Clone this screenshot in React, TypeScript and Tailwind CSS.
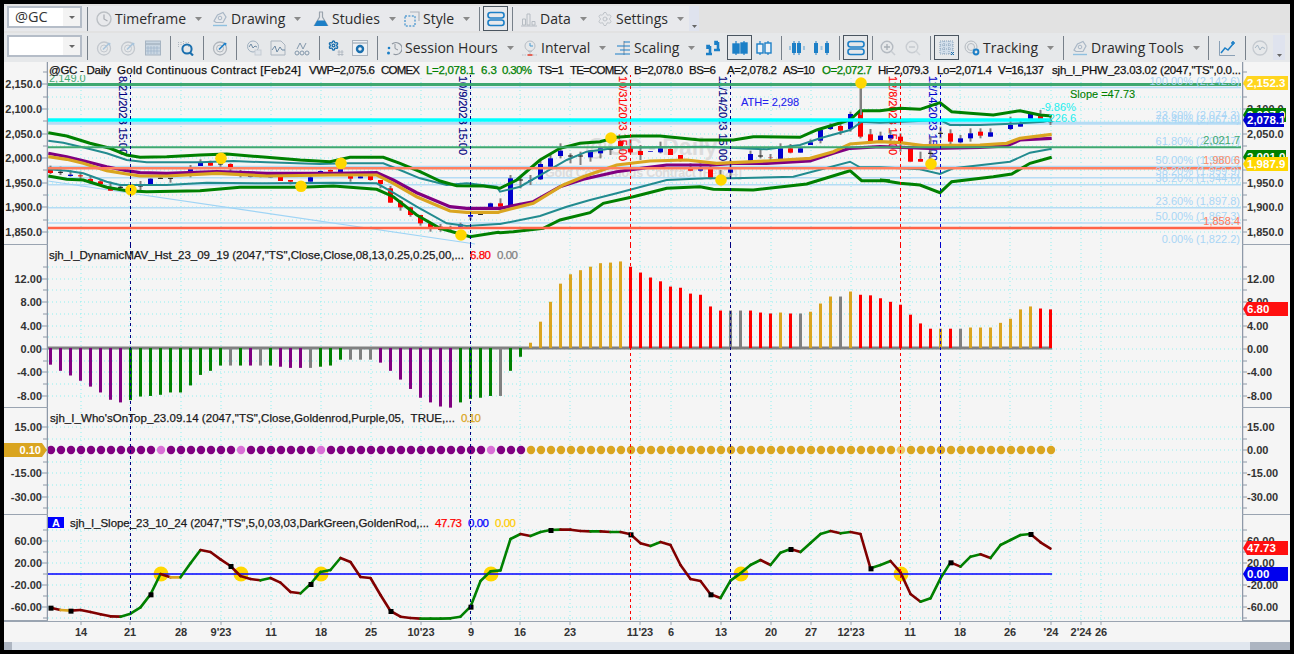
import React from 'react';
import { Settings } from 'lucide-react';

// x of bar i in the plot
const bx = (i: number) => 50.5 + 10 * i;

const BLUE = '#1c7fc7';
const DIS = '#c3c8ce';

type TP = { x: number; y: number; c?: string; s?: number; a?: 'start' | 'middle' | 'end'; b?: boolean; fake?: number; w?: number; children: React.ReactNode };

const T = ({ x, y, c = '#1a1a1a', s = 11, a = 'start', b = false, fake = 0.25, w, children }: TP) => (
  <text x={x} y={y} fill={c} stroke={b ? 'none' : c} strokeWidth={b ? 0 : fake} fontSize={s} textAnchor={a} fontWeight={b ? 700 : 400} dominantBaseline="central" xmlSpace="preserve" textLength={w}>
    {children}
  </text>
);

const Caret = () => (
  <svg width="7" height="4" viewBox="0 0 7 4" className="ml-[9px] shrink-0">
    <path d="M0 0h7L3.5 4z" fill="#8a8a8a" />
  </svg>
);

const Sep = ({ className = '' }: { className?: string }) => <div className={`h-[24px] w-px shrink-0 bg-[#77808a] ${className}`} />;

const Ic = ({ children, className = '', w = 16 }: { children: React.ReactNode; className?: string; w?: number }) => (
  <svg width={w} height="16" viewBox={`0 0 ${w} 16`} fill="none" className={`shrink-0 ${className}`}>
    {children}
  </svg>
);

const Boxed = ({ children, className = '' }: { children: React.ReactNode; className?: string }) => (
  <div className={`flex h-[25px] w-[25px] shrink-0 items-center justify-center border-[1.5px] border-[#4a5560] ${className}`}>{children}</div>
);

const Combo = ({ text = '', className = '' }: { text?: string; className?: string }) => (
  <div className={`flex h-[22px] w-[75px] shrink-0 items-center self-start border-2 border-[#b5bdc8] bg-white ${className}`}>
    <span className="w-[54px] pl-[6px] text-[14.5px] text-[#333]">{text}</span>
    <div className="flex h-full flex-1 items-center justify-center bg-[#f3f3f3]">
      <svg width="6" height="3" viewBox="0 0 6 3"><path d="M0 0h6L3 3z" fill="#666" /></svg>
    </div>
  </div>
);

const Menu = ({ icon, label, className }: { icon: React.ReactNode; label: string; className: string }) => (
  <div className={`flex shrink-0 items-center ${className}`}>
    {icon}
    <span className="ml-[3px] text-[14px] leading-none text-[#2b2b2b]">{label}</span>
    <Caret />
  </div>
);

const Chevron = ({ className }: { className: string }) => (
  <div className={`flex h-[25px] shrink-0 items-end justify-center pb-[3px] ${className} bg-[#dfe3ee]`}>
    <svg width="5" height="3" viewBox="0 0 5 3"><path d="M0 0h5L2.5 3z" fill="#666" /></svg>
  </div>
);

const Panels = () => (
  <Ic w={18}>
    <rect x="1" y="1.5" width="16" height="5.5" rx="2.5" stroke={BLUE} strokeWidth="1.6" />
    <rect x="1" y="9" width="16" height="5.5" rx="2.5" stroke={BLUE} strokeWidth="1.6" />
  </Ic>
);
const Candles = ({ fill }: { fill: boolean }) => (
  <Ic w={18}>
    <path d="M5 1v14M13 1v14" stroke={BLUE} strokeWidth="1.2" />
    <rect x="2" y="4" width="6" height="9" fill={fill ? BLUE : '#eef3f8'} stroke={BLUE} strokeWidth="1.4" />
    <rect x="10" y="3" width="6" height="10" fill={fill ? BLUE : '#eef3f8'} stroke={BLUE} strokeWidth="1.4" />
  </Ic>
);
const RadarArrow = ({ c = DIS }: { c?: string }) => (
  <Ic>
    <circle cx="8" cy="8.5" r="6.5" stroke={c} strokeWidth="1.3" />
    <circle cx="8" cy="8.5" r="3.5" stroke={c} />
    <path d="M7 9.5l6-6" stroke={c === DIS ? '#a8c4dc' : BLUE} strokeWidth="1.6" />
    <path d="M11.5 2.5l3 .5-.5 3" fill={c === DIS ? '#a8c4dc' : BLUE} />
  </Ic>
);
const PenIcon = () => (
  <Ic>
    <path d="M2 10l3.5-6L11 1.5l3 4.5-3 5.5H4z" stroke="#a9b7c6" strokeWidth="1.2" />
    <circle cx="8" cy="7" r="1.8" stroke="#a9b7c6" />
    <path d="M1 14.5h14" stroke="#8fc0e0" strokeWidth="1.4" />
  </Ic>
);

function Toolbars() {
  return (
    <div className="flex h-[58px] shrink-0 flex-col bg-[#e2e2e2] [font-family:'Open_Sans','Noto_Sans',sans-serif]">
      <div className="h-[29px] pt-[2px]">
        <div className="flex h-[25px] w-[695px] items-center bg-[#e8e9ec] pl-[3px]">
          <Combo text="@GC" />
          <Sep className="ml-[5px]" />
          <Menu className="ml-[8px] w-[116px]" label="Timeframe" icon={<Ic><circle cx="8" cy="8" r="7" stroke="#bcc0c5" strokeWidth="1.4" /><path d="M8 3.5V8l3.5 2" stroke="#a8acb2" strokeWidth="1.2" /></Ic>} />
          <Menu className="w-[101px]" label="Drawing" icon={<PenIcon />} />
          <Menu className="w-[91px]" label="Studies" icon={<Ic><path d="M6 1h4M6.5 1v5L1.5 14.5h13L9.5 6V1" stroke="#9aa3ad" strokeWidth="1.2" /><path d="M4.2 9.5h7.6l3 5.5H1.2z" fill={BLUE} /></Ic>} />
          <Menu className="w-[75px]" label="Style" icon={<Ic><rect x="1" y="5" width="10" height="10" stroke={BLUE} strokeDasharray="2 1.4" /><path d="M6 1h9v9" stroke="#aeb4bb" strokeWidth="1.2" /></Ic>} />
          <Sep />
          <Boxed className="ml-[3px]"><Panels /></Boxed>
          <Sep className="ml-[4px]" />
          <Menu className="ml-[8px] w-[76px]" label="Data" icon={<Ic><path d="M1.5 8h3v6h-3zM6 3h3v11H6zM11 10.5h3V14h-3zM0 15h16" stroke="#b6bcc3" /></Ic>} />
          <Menu className="w-[92px]" label="Settings" icon={<Settings size={16} color="#b9bec4" strokeWidth={1.3} className="shrink-0" />} />
          <Chevron className="w-[10px]" />
        </div>
      </div>
      <div className="flex h-[29px] items-center bg-[#e6e8ea] pl-[3px]">
        <Combo className="mt-[2px]" />
        <Sep className="ml-[5px]" />
        <div className="ml-[8px]"><RadarArrow /></div>
        <div className="ml-[8px]"><RadarArrow /></div>
        <Ic className="ml-[9px]"><rect x="0.5" y="1" width="15" height="14" fill="#c9d6e2" stroke="#a6b4c2" /><path d="M0.5 4h15" stroke="#a6b4c2" strokeWidth="1.5" /><path d="M3 6v8M6 6v8M9 6v8M12 6v8M1 8h14M1 11h14" stroke="#9fb5ca" strokeWidth="0.7" /></Ic>
        <Sep className="ml-[9px]" />
        <Ic className="ml-[7px]"><path d="M0.5 7V1M3 5V1M5.5 4V1M8 5V1M10.5 7V1" stroke="#aeb6bf" strokeDasharray="1 1" /><circle cx="9" cy="9" r="4.6" stroke="#1a6fae" strokeWidth="2" /><path d="M12 12.5l3 3" stroke="#1a6fae" strokeWidth="2.2" /></Ic>
        <Sep className="ml-[9px]" />
        <div className="ml-[8px]"><RadarArrow c="#b0b6bd" /></div>
        <Sep className="ml-[8px]" />
        <Ic className="ml-[9px]"><circle cx="7" cy="6.5" r="5.5" stroke="#9fb0c0" /><path d="M3 7l2-3 2 4 2-2 2 1" stroke="#6f8ba5" /><rect x="9" y="10" width="6" height="5" fill="#dfe4ea" stroke="#c5ccd3" /></Ic>
        <Ic className="ml-[8px]"><path d="M1 1h10l4 4v10H1z" stroke="#aab4bf" /><path d="M2 10l3-4 2 6 3-5 2 3h3" stroke="#6f8ba5" /></Ic>
        <Ic className="ml-[8px]"><path d="M3 9l3-6 3 6 3-6" stroke="#8297ab" /><circle cx="3" cy="13" r="2" stroke="#8297ab" /><circle cx="8" cy="13" r="2" stroke="#8297ab" /><circle cx="13" cy="13" r="2" stroke="#8297ab" /></Ic>
        <Sep className="ml-[9px]" />
        <Ic className="ml-[8px]"><Settings x="0" y="0" width="11" height="11" color="#1a6fae" strokeWidth={3} /><path d="M11 10v6M14 10v6M9.5 12h6M9.5 14.5h6" stroke="#aab3bd" strokeWidth="0.8" /></Ic>
        <Ic className="ml-[8px]"><rect x="0.5" y="0.5" width="15" height="15" fill="#eef1f4" stroke="#a9b3be" /><path d="M0.5 3h15" stroke="#a9b3be" strokeWidth="1.4" /><circle cx="8" cy="9" r="3" stroke="#1a6fae" strokeWidth="2.4" /></Ic>
        <Sep className="ml-[9px]" />
        <Menu className="ml-[8px] w-[136px]" label="Session Hours" icon={<Ic><path d="M6 4a6 6 0 1 1 1.5 10" stroke="#8f97a0" strokeWidth="1.2" /><path d="M9 4v4.5l3 1.5" stroke="#8f97a0" /><circle cx="3" cy="8" r="1.3" fill={BLUE} /><circle cx="2.5" cy="13" r="1.5" fill={BLUE} /></Ic>} />
        <Menu className="w-[93px]" label="Interval" icon={<Ic><circle cx="8" cy="6" r="5" stroke="#b8bec5" /><path d="M8 3v3h3" stroke="#4a9ad0" /><path d="M6 11.5h4M7 13h2" stroke="#b8bec5" /><path d="M0 15h5M11 15h5" stroke="#b8bec5" strokeDasharray="1.5 1" /><path d="M5.5 15h5" stroke="#e04030" strokeWidth="1.6" /></Ic>} />
        <Menu className="w-[91px]" label="Scaling" icon={<Ic><path d="M9 1v14" stroke="#7f8a96" /><path d="M9 2h6M2 6h13M5 10h10M0 14h15" stroke={BLUE} /></Ic>} />
        <Ic><path d="M4 6v8M4 6H1.5v3M12 2v8M12 2H9.5v3" stroke={BLUE} strokeWidth="2.6" /><path d="M0 14h6M8 10h6" stroke={BLUE} strokeWidth="2.4" /></Ic>
        <Boxed className="ml-[5px]"><Candles fill /></Boxed>
        <div className="ml-[3px]"><Candles fill={false} /></div>
        <Sep className="ml-[8px]" />
        <Ic className="ml-[7px]" w={17}><path d="M5 1v14M10 1v14" stroke={BLUE} strokeWidth="1" /><rect x="3" y="3" width="4" height="10" fill={BLUE} /><rect x="8" y="3" width="4" height="10" fill={BLUE} /><path d="M1 6v4M15 6v4" stroke="#9cc3df" strokeWidth="2" /></Ic>
        <Ic className="ml-[7px]" w={17}><path d="M3 1v14M14 1v14" stroke={BLUE} strokeWidth="1" /><rect x="1" y="3" width="4" height="10" fill={BLUE} /><rect x="12" y="3" width="4" height="10" fill={BLUE} /><path d="M8.5 6v4" stroke="#9cc3df" strokeWidth="2" /></Ic>
        <Sep className="ml-[9px]" />
        <Boxed className="ml-[3px]"><Panels /></Boxed>
        <Sep className="ml-[4px]" />
        <Ic className="ml-[7px]"><circle cx="7" cy="7" r="5.8" stroke="#b4bac1" strokeWidth="1.4" /><path d="M4 7h6M7 4v6" stroke="#a8aeb5" strokeWidth="1.3" /><path d="M11 11l4 4" stroke="#c9cdd2" strokeWidth="1.6" /></Ic>
        <Ic className="ml-[9px]"><circle cx="7" cy="7" r="5.8" stroke="#c9cdd2" strokeWidth="1.4" /><path d="M4 7h6" stroke="#c0c4c9" strokeWidth="1.3" /><path d="M11 11l4 4" stroke="#d2d6da" strokeWidth="1.6" /></Ic>
        <Sep className="ml-[9px]" />
        <Boxed className="ml-[3px]"><Ic><rect x="1" y="1" width="13" height="13" fill="#d2deea" stroke="#8aa3bb" strokeDasharray="1 1" /><path d="M1 5h13M1 9h13M5 1v13M10 1v13" stroke="#8aa3bb" strokeDasharray="1 1" /><path d="M12 12l3 3M15 12l-3 3" stroke="#1a6fae" /></Ic></Boxed>
        <Menu className="ml-[5px] w-[99px]" label="Tracking" icon={<Ic><circle cx="7" cy="7" r="6" stroke="#b4bac1" /><circle cx="7" cy="7" r="3.5" stroke="#b4bac1" /><circle cx="12" cy="12" r="2.4" stroke={BLUE} strokeWidth="2" /></Ic>} />
        <Sep />
        <Menu className="ml-[8px] w-[136px]" label="Drawing Tools" icon={<PenIcon />} />
        <Sep />
        <Ic className="ml-[10px]"><path d="M0.5 1v14.5H16" stroke="#8aa0b5" /><path d="M2 13l4-5 3 2 5-6" stroke={BLUE} strokeWidth="1.5" /><path d="M12 3h4M14 1v4" stroke={BLUE} strokeWidth="1.6" /></Ic>
        <Sep className="ml-[10px]" />
        <Ic className="ml-[6px]"><circle cx="8" cy="8" r="7" stroke="#c5cad0" strokeWidth="1.3" /><path d="M3 8l2.5-3 2.5 5 2-3 3 1.5" stroke="#a8b8c6" /></Ic>
        <Chevron className="ml-[5px] w-[12px]" />
      </div>
    </div>
  );
}

const GX = [81, 130, 181, 221, 271, 321, 371, 421, 471, 520, 570, 640, 671, 721, 771, 811, 851, 910, 960, 1010, 1051, 1081, 1101];
const VLINES = [
  { x: 130.5, c: '#000080' },
  { x: 470.5, c: '#000080' },
  { x: 630.5, c: '#ff0000' },
  { x: 730.5, c: '#000080' },
  { x: 900.5, c: '#ff0000' },
  { x: 940.5, c: '#0000cd' },
];

type Tick = { y: number; l?: string };

function Axis({ side, top, h, ticks, children }: { side: 'left' | 'right'; top: number; h: number; ticks: Tick[]; children?: React.ReactNode }) {
  const left = side === 'left';
  return (
    <svg className={left ? 'w-[44px] shrink-0' : 'w-[48px] shrink-0'} height={h} viewBox={`${left ? 4 : 1242} ${top} ${left ? 44 : 48} ${h}`}>
      {left ? <path d={`M47.5 ${top}v${h}`} stroke="#8e99a8" strokeWidth="1.5" /> : <path d={`M1242.5 ${top}v${h}`} stroke="#8e99a8" strokeWidth="1.5" />}
      <path d={left ? `M4 ${top + h - 0.5}h44` : `M1242 ${top + h - 0.5}h48`} stroke="#9aa4b1" />
      {ticks.map((t) =>
        left ? (
          <g key={t.y}>
            <path d={`M${t.l ? 42 : 43} ${t.y}H47`} stroke="#8e99a8" />
            {t.l && <T x={42} y={t.y} a="end" b c="#333">{t.l}</T>}
          </g>
        ) : (
          <g key={t.y}>
            <path d={`M1243 ${t.y}H1247`} stroke="#8e99a8" />
            {t.l && <T x={1247} y={t.y} b c="#333">{t.l}</T>}
          </g>
        ),
      )}
      {children}
    </svg>
  );
}

const Tag = ({ y, fill, label, r = 1288 }: { y: number; fill: string; label?: string; r?: number }) => (
  <g>
    <polygon points={`1243,${y} 1247,${y - 7} ${r},${y - 7} ${r},${y + 7} 1247,${y + 7}`} fill={fill} />
    {label && <T x={1247} y={y} b c="#fff" s={11.5}>{label}</T>}
  </g>
);

function Plot({ top, h, ticks, children, over }: { top: number; h: number; ticks: Tick[]; children?: React.ReactNode; over?: React.ReactNode }) {
  return (
    <svg className="w-[1194px] shrink-0" height={h} viewBox={`48 ${top} 1194 ${h}`}>
      <g stroke="#8ff0f0" strokeDasharray="1 3">
        {ticks.map((t) => <path key={t.y} d={`M48 ${t.y}H1242`} />)}
        {GX.map((x) => <path key={x} d={`M${x} ${top}v${h}`} />)}
      </g>
      {children}
      {VLINES.map((v) => <path key={v.x} d={`M${v.x} ${top}v${h}`} stroke={v.c} strokeDasharray="3 3" />)}
      {over}
    </svg>
  );
}

// ----- pane 1 data: display coords from three crops, mapped back to page px
type P = [number, number];
const mapSeg = (pts: P[], ox: number, oy: number): string => pts.map(([x, y]) => `${(ox + x / 3).toFixed(1)},${(oy + y / 3).toFixed(1)}`).join(' ');
const ma = (a: P[], b: P[], c: P[]) => [mapSeg(a, 0, 100), mapSeg(b, 500, 80), mapSeg(c, 880, 70)].join(' ');

const upGreen = ma(
  [[145, 98], [200, 108], [270, 130], [330, 145], [380, 165], [420, 172], [500, 170], [600, 165], [680, 162], [800, 172], [900, 180], [990, 185], [1050, 172], [1150, 172], [1200, 190], [1260, 215], [1320, 243], [1370, 257], [1450, 258]],
  [[0, 325], [50, 300], [120, 240], [180, 205], [240, 190], [300, 185], [350, 172], [400, 168], [480, 168], [600, 180], [700, 180], [760, 170], [900, 172], [950, 150], [1000, 135], [1050, 120], [1080, 92]],
  [[0, 122], [60, 115], [120, 118], [180, 98], [215, 125], [270, 130], [340, 135], [420, 122], [480, 135], [515, 138]],
);
const upTeal = ma(
  [[145, 122], [190, 128], [260, 145], [320, 160], [380, 180], [440, 187], [600, 187], [700, 183], [800, 187], [960, 192], [1040, 190], [1150, 190], [1200, 210], [1260, 235], [1340, 255], [1400, 250], [1490, 260]],
  [[0, 335], [60, 320], [130, 280], [200, 240], [260, 215], [350, 203], [620, 200], [800, 208], [900, 195], [960, 175], [1050, 150], [1085, 125]],
  [[0, 158], [180, 150], [210, 165], [300, 165], [420, 160], [490, 155], [515, 150]],
);
const purple = ma(
  [[145, 160], [200, 170], [250, 182], [320, 200], [380, 212], [420, 218], [500, 220], [650, 215], [800, 220], [1000, 220], [1130, 218], [1180, 240], [1250, 278], [1350, 320], [1400, 325], [1495, 325]],
  [[0, 385], [100, 365], [180, 320], [250, 298], [350, 275], [400, 268], [500, 255], [640, 255], [700, 250], [800, 250], [930, 243], [1000, 220], [1050, 205]],
  [[0, 230], [150, 235], [300, 232], [380, 228], [420, 210], [515, 205]],
);
const gold = ma(
  [[145, 170], [200, 178], [250, 190], [320, 212], [380, 222], [420, 228], [500, 228], [650, 220], [800, 228], [1000, 225], [1130, 225], [1180, 250], [1250, 290], [1350, 333], [1400, 337], [1495, 337]],
  [[0, 395], [100, 370], [190, 315], [250, 290], [350, 255], [450, 243], [560, 240], [650, 250], [800, 243], [930, 235], [1000, 215], [1050, 192]],
  [[0, 215], [60, 218], [130, 227], [300, 225], [380, 220], [420, 205], [515, 193]],
);
const lowTeal = ma(
  [[145, 208], [200, 212], [250, 220], [320, 245], [360, 255], [500, 255], [620, 248], [800, 250], [1000, 248], [1130, 250], [1180, 278], [1250, 320], [1340, 370], [1400, 378], [1495, 372]],
  [[0, 432], [120, 408], [200, 380], [270, 360], [350, 340], [500, 300], [620, 295], [700, 295], [880, 290], [1050, 245], [1080, 262]],
  [[0, 292], [120, 298], [180, 312], [220, 295], [390, 275], [450, 248], [515, 236]],
);
const lowGreen = ma(
  [[145, 228], [200, 238], [250, 240], [320, 262], [380, 272], [440, 275], [600, 272], [720, 262], [900, 262], [1000, 258], [1130, 268], [1180, 290], [1250, 345], [1320, 385], [1410, 410], [1495, 397]],
  [[0, 458], [40, 455], [130, 445], [180, 420], [270, 398], [310, 370], [400, 350], [500, 325], [600, 320], [640, 328], [760, 330], [920, 312], [1050, 272], [1085, 302], [1170, 302]],
  [[0, 330], [60, 340], [120, 345], [180, 368], [215, 335], [340, 320], [395, 312], [450, 280], [515, 262]],
);

// [wick top, body top, body bottom, wick bottom, colour]; display y in the crop
type C = [number, number, number, number, string] | null;
const C1: C[] = [
  [197, 207, 219, 222, 'r'], [200, 217, 217, 225, 'g'], [210, 224, 228, 230, 'b'], [215, 226, 229, 240, 'r'], [227, 237, 247, 252, 'r'], [238, 244, 252, 258, 'r'], [245, 265, 272, 272, 'r'], [255, 262, 262, 270, 'g'],
  null, [243, 258, 258, 270, 'g'], [235, 236, 252, 252, 'b'], [232, 235, 235, 236, 'g'], [235, 235, 235, 248, 'g'], null, [195, 205, 215, 232, 'b'], [178, 187, 198, 198, 'b'], [182, 187, 197, 197, 'r'], [185, 192, 192, 200, 'g'],
  [190, 192, 207, 215, 'r'], [210, 224, 228, 232, 'r'], [225, 228, 231, 232, 'b'], [225, 228, 231, 232, 'r'], [225, 227, 232, 233, 'b'], [225, 228, 243, 243, 'r'], [240, 240, 245, 253, 'r'], null, [225, 232, 245, 245, 'b'], [212, 213, 218, 222, 'b'],
  [208, 210, 215, 215, 'r'], [205, 207, 218, 218, 'b'], [225, 228, 236, 245, 'r'], [228, 229, 235, 235, 'b'], [225, 228, 240, 242, 'r'], [240, 240, 252, 265, 'r'], [258, 265, 308, 308, 'r'], [300, 304, 322, 332, 'r'], [320, 322, 345, 350, 'r'], [345, 345, 370, 377, 'r'],
  [370, 370, 382, 395, 'r'], [372, 380, 390, 395, 'r'], [377, 384, 384, 395, 'g'], [368, 373, 380, 385, 'b'], [345, 345, 350, 360, 'b'], [340, 343, 343, 345, 'g'], [308, 310, 322, 322, 'b'],
];
const C2: C[] = [
  [355, 370, 380, 385, 'r'], [285, 295, 378, 378, 'b'], [290, 300, 300, 325, 'g'], [285, 300, 302, 315, 'b'], [240, 252, 298, 300, 'b'], [220, 235, 260, 260, 'b'], [190, 212, 228, 235, 'b'], [220, 228, 228, 250, 'g'], [215, 228, 228, 255, 'g'],
  [210, 212, 232, 245, 'b'], [205, 205, 220, 235, 'b'], [200, 208, 208, 225, 'g'], [180, 183, 200, 212, 'r'], [178, 205, 217, 220, 'r'], [195, 213, 225, 240, 'r'], [213, 213, 215, 215, 'b'], [185, 205, 217, 220, 'b'], [205, 207, 225, 225, 'r'], [225, 225, 237, 245, 'r'],
  [250, 265, 272, 272, 'r'], [250, 267, 272, 275, 'b'], [255, 265, 295, 298, 'r'], [270, 290, 295, 315, 'r'], [240, 268, 278, 295, 'b'], null, [212, 222, 242, 245, 'b'], [210, 228, 228, 235, 'g'], [222, 232, 233, 245, 'r'], [190, 205, 237, 237, 'b'], [192, 205, 218, 220, 'r'], [205, 205, 218, 218, 'b'],
  [178, 187, 195, 195, 'b'], [145, 150, 182, 190, 'b'], [130, 135, 147, 150, 'b'], [130, 138, 152, 165, 'r'], [95, 102, 147, 155, 'b'], [25, 95, 170, 175, 'r'], [147, 163, 185, 190, 'r'],
];
const C3: C[] = [
  [185, 197, 212, 215, 'b'], [180, 195, 205, 215, 'b'], [190, 200, 215, 245, 'r'], [237, 237, 275, 275, 'r'], [245, 267, 275, 275, 'r'], [200, 250, 250, 290, 'g'], [170, 190, 190, 205, 'g'], [178, 190, 215, 222, 'r'], [195, 205, 217, 220, 'b'], [175, 190, 205, 215, 'b'],
  [175, 185, 197, 205, 'r'], [175, 187, 200, 200, 'b'], null, [140, 165, 177, 180, 'b'], [148, 162, 170, 170, 'b'], [130, 130, 150, 150, 'b'], [120, 135, 147, 155, 'r'], [140, 155, 155, 165, 'g'],
];

function Candle({ c, i, oy }: { c: C; i: number; oy: number }) {
  if (!c) return null;
  const [wt, bt, bb, wb, col] = c;
  const x = bx(i);
  const fill = col === 'r' ? '#ff0000' : col === 'b' ? '#0000cd' : '#111';
  const h = (bb - bt) / 3;
  return (
    <g>
      <path d={`M${x} ${oy + wt / 3}V${oy + wb / 3}`} stroke="#808080" strokeWidth="2" />
      {h > 0 ? <rect x={x - 2.5} y={oy + bt / 3} width="5" height={h} fill={fill} /> : <path d={`M${x - 2.5} ${oy + bt / 3}h5`} stroke={fill} />}
    </g>
  );
}

const dots: P[] = [[131, 190], [221, 158.3], [301, 186.3], [341, 163.3], [461, 235], [611, 138], [721, 180], [861, 83], [931, 164]];
const rot: [number, string, string][] = [
  [126.5, '8/21/2023 15:00', '#000080'],
  [466.5, '10/9/2023 15:00', '#000080'],
  [626.5, '10/31/2023 15:00', '#ff0000'],
  [726.5, '11/14/2023 15:00', '#000080'],
  [896.5, '12/8/2023 15:00', '#ff0000'],
  [936.5, '12/14/2023 15:00', '#0000cd'],
];
const fibs: [number, string][] = [
  [81, '100.00% (2,142.6)'], [114.5, '23.60% (2,074.3)'], [118.5, '76.40% (2,067.0)'], [141, '61.80% (2,021.7)'], [160, '50.00% (1,980.6)'], [171, '38.20% (1,959.9)'], [178, '38.20% (1,944.6)'], [201, '23.60% (1,897.8)'], [216, '50.00% (1,867.3)'], [239, '0.00% (1,822.2)'],
];
const LB = '#b5dcf5';

const head1: [number, number, string, string?][] = [
  [49, 62, '@GC - Daily'], [117, 184, 'Gold Continuous Contract [Feb24]'], [309, 66, 'VWP=2,075.6'], [381, 39, 'COMEX'], [426, 49, 'L=2,078.1', '#008000'], [481, 16, '6.3', '#008000'], [502, 30, '0.30%', '#008000'], [538, 26, 'TS=1'], [570, 58, 'TE=COMEX'], [634, 49, 'B=2,078.0'], [689, 27, 'BS=6'], [727, 50, 'A=2,078.2'], [783, 32, 'AS=10'], [822, 50, 'O=2,072.7', '#008000'], [878, 51, 'Hi=2,079.3'], [937, 55, 'Lo=2,071.4'], [998, 46, 'V=16,137'], [1052, 189, 'sjh_I_PHW_23.03.02 (2047,"TS",0.0...'],
];

const ticksOf = (start: number, step: number, n: number, labels: Record<number, string>): Tick[] =>
  Array.from({ length: n }, (_, k) => ({ y: Math.round(start + step * k), l: labels[k] }));

function PricePane() {
  const lt: Tick[] = ticksOf(72, 12.3, 14, { 1: '2,150.0', 3: '2,100.0', 5: '2,050.0', 7: '2,000.0', 9: '1,950.0', 11: '1,900.0', 13: '1,850.0' });
  const gt = lt.filter((t) => t.y > 80);
  return (
    <div className="flex h-[183px] shrink-0">
      <Axis side="left" top={62} h={183} ticks={lt} />
      <Plot top={62} h={183} ticks={gt} over={
        <g>
          {fibs.map(([y, t]) => <T key={t} x={1240} y={y} a="end" c="#a9d6f5" s={11} fake={0}>{t}</T>)}
          <T x={1240} y={160} a="end" c="#ff8a65" s={11} fake={0}>1,980.6</T>
          <T x={1240} y={221} a="end" c="#ff7a5c" s={11} fake={0}>1,858.4</T>
          <T x={1240} y={140} a="end" c="#3fa86f" s={11} fake={0}>2,021.7</T>
          <T x={741} y={102} c="#2222ee" s={11} fake={0.1}>ATH= 2,298</T>
          <T x={1070} y={94} c="#008000" s={11} fake={0.1}>Slope =47.73</T>
          <T x={1041} y={107} c="#22eeee" s={11} fake={0}>-9.86%</T>
          <T x={1045} y={118} c="#22eeee" s={11} fake={0}>-226.6</T>
          <T x={49} y={78} c="#3fa86f" s={11} fake={0}>2,149.0</T>
          <rect x="48" y="62" width="1194" height="13" fill="#f5f5f5" />
          {head1.map(([x, w, t, c]) => <T key={x} x={x} y={70} w={w} s={11.5} c={c ?? '#111'}>{t}</T>)}
        </g>
      }>
        <text x="585" y="155" fontSize="23" fontWeight="700" fill="#dcdcdc">@GC - Daily</text>
        <text x="545" y="177" fontSize="12.5" fontWeight="700" fill="#dcdcdc" textLength="197">Gold Continuous Contract [Feb24]</text>
        <path d="M48 87.5H1241M48 124H1241M48 122.5H1241M48 166.5H1241M48 177.7H1241M48 184.7H1241M48 207.7H1241M48 223H1241" stroke={LB} strokeWidth="1.6" fill="none" />
        <path d="M48 181L475 244" stroke="#9fd4f5" strokeWidth="1.2" />
        {rot.map(([x, t, c]) => (
          <text key={t} transform={`rotate(90 ${x} 76)`} x={x} y={76} fill={c} fontSize={11} dominantBaseline="hanging" stroke={c} strokeWidth="0.15" textLength={t.length === 15 ? 79 : 85}>{t}</text>
        ))}
        {C1.map((c, i) => <Candle key={i} c={c} i={i} oy={100} />)}
        {C2.map((c, i) => <Candle key={i} c={c} i={i + 45} oy={80} />)}
        {C3.map((c, i) => <Candle key={i} c={c} i={i + 83} oy={70} />)}
        <polyline points={upTeal} fill="none" stroke="#228b8f" strokeWidth="2" />
        <polyline points={lowTeal} fill="none" stroke="#228b8f" strokeWidth="2" />
        <polyline points={purple} fill="none" stroke="#800080" strokeWidth="3.2" />
        <polyline points={gold} fill="none" stroke="#daa520" strokeWidth="3.2" />
        <polyline points={upGreen} fill="none" stroke="#008000" strokeWidth="3" />
        <polyline points={lowGreen} fill="none" stroke="#008000" strokeWidth="3" />
        <path d="M48 84.5H1241" stroke="#3fa86f" strokeWidth="3" />
        <path d="M48 120H1050" stroke="#00ffff" strokeWidth="3.6" />
        <path d="M48 147.2H1241" stroke="#3fa86f" strokeWidth="2" />
        <path d="M48 168.3H1241" stroke="#ff7f5f" strokeWidth="2.4" />
        <path d="M48 228H1241" stroke="#ff6347" strokeWidth="2.4" />
        <path d="M861 88V115" stroke="#808080" strokeWidth="2" />
        {dots.map(([x, y]) => <circle key={x} cx={x} cy={y} r="5.8" fill="#ffd700" />)}
      </Plot>
      <Axis side="right" top={62} h={183} ticks={lt}>
        <Tag y={83} fill="#ffd51f" label="2,152.3" />
        <Tag y={115} fill="#008000" r={1286} label="2,097.0" />
        <Tag y={120} fill="#0000cd" label="2,078.1" r={1284} />
        <Tag y={157} fill="#008000" r={1286} label="2,001.0" />
        <Tag y={164} fill="#ffd700" label="1,987.9" />
      </Axis>
    </div>
  );
}

// histogram values, colour p/g/a(gray)/o(gold)/r
const HIST: [number, string][] = [
  [-2.85, 'p'], [-3.9, 'p'], [-4.7, 'p'], [-5.6, 'p'], [-6.6, 'p'], [-7.6, 'p'], [-8.85, 'p'], [-9.3, 'p'], [-8.9, 'g'], [-8.3, 'g'], [-8.2, 'g'], [-8, 'g'], [-7.6, 'g'], [-7.6, 'g'], [-6.4, 'g'], [-4.6, 'g'], [-3.9, 'g'], [-3, 'g'], [-3, 'a'], [-3, 'g'],
  [-3, 'p'], [-3, 'a'], [-3, 'g'], [-3.2, 'p'], [-3.4, 'p'], [-3.4, 'p'], [-3.4, 'a'], [-3.2, 'g'], [-3, 'g'], [-2, 'g'], [-2, 'a'], [-2, 'a'], [-2, 'a'], [-2.5, 'p'], [-3.9, 'p'], [-5.4, 'p'], [-7, 'p'], [-8.5, 'p'], [-9.3, 'p'], [-10, 'p'],
  [-10.2, 'p'], [-9.3, 'g'], [-8.7, 'g'], [-8.5, 'g'], [-8.2, 'g'], [-8.2, 'a'], [-3.9, 'g'], [-1.5, 'g'], [0.9, 'o'], [4.5, 'o'], [7.9, 'o'], [11, 'o'], [12.6, 'o'], [13.3, 'o'], [13.9, 'o'], [14.5, 'o'], [14.6, 'o'], [14.8, 'o'], [13.9, 'r'], [12.9, 'r'],
  [12.05, 'r'], [11.4, 'r'], [10.5, 'r'], [10.3, 'r'], [9.3, 'r'], [9.1, 'r'], [7.1, 'r'], [6.4, 'r'], [6.4, 'a'], [6.4, 'a'], [6.4, 'r'], [6.06, 'r'], [5.9, 'r'], [6.06, 'o'], [5.9, 'r'], [5.9, 'a'], [6.2, 'o'], [7.6, 'o'], [8.8, 'o'], [8.8, 'a'],
  [9.65, 'o'], [9.1, 'r'], [9, 'r'], [8.5, 'r'], [7.9, 'r'], [7.4, 'r'], [5.7, 'r'], [4.2, 'r'], [3.3, 'r'], [3.3, 'o'], [3.3, 'r'], [3.3, 'a'], [3.5, 'o'], [3.5, 'o'], [3.5, 'o'], [4.3, 'o'], [5, 'o'], [6.6, 'o'], [7.1, 'o'], [6.75, 'r'], [6.6, 'r'],
];
const HC: Record<string, string> = { p: '#800080', g: '#008000', a: '#808080', o: '#daa520', r: '#ff0000' };

function HistPane() {
  const t: Tick[] = ticksOf(267, 11.7, 12, { 1: '12.00', 3: '8.00', 5: '4.00', 7: '0.00', 9: '-4.00', 11: '-8.00' });
  return (
    <div className="flex h-[163px] shrink-0">
      <Axis side="left" top={245} h={163} ticks={t} />
      <Plot top={245} h={163} ticks={t} over={
        <g>
          <T x={49} y={255} w={415} s={11.5}>sjh_I_DynamicMAV_Hst_23_09_19 (2047,"TS",Close,Close,08,13,0.25,0.25,00,...</T>
          <T x={470} y={255} w={21} s={11.5} c="#ff0000">6.80</T>
          <T x={497} y={255} w={21} s={11.5} c="#808080">0.00</T>
        </g>
      }>
        <path d="M48 348H1052" stroke="#808080" strokeWidth="3" />
        {HIST.map(([v, c], i) => (
          <rect key={i} x={bx(i) - 1.5} y={v > 0 ? 348 - v * 5.85 : 348} width="3" height={Math.abs(v) * 5.85} fill={HC[c]} />
        ))}
      </Plot>
      <Axis side="right" top={245} h={163} ticks={t}>
        <Tag y={309} fill="#ff1010" label="6.80" />
      </Axis>
    </div>
  );
}

function TopPane() {
  const t: Tick[] = ticksOf(427, 11.6, 8, { 0: '15.00', 4: '-15.00', 6: '-30.00' });
  const tr: Tick[] = ticksOf(427, 11.6, 8, { 0: '15.00', 2: '0.00', 4: '-15.00', 6: '-30.00' });
  const pink = [11, 19, 27, 44];
  return (
    <div className="flex h-[107px] shrink-0">
      <Axis side="left" top={408} h={107} ticks={t}>
        <polygon points="4,443 42,443 47,450 42,457 4,457" fill="#daa520" />
        <T x={41} y={450} a="end" b c="#fff">0.10</T>
      </Axis>
      <Plot top={408} h={107} ticks={t} over={
        <g>
          <T x={50} y={418} w={405} s={11.5}>sjh_I_Who'sOnTop_23.09.14 (2047,"TS",Close,Goldenrod,Purple,05,  TRUE,...</T>
          <T x={461} y={418} w={20} s={11.5} c="#daa520">0.10</T>
        </g>
      }>
        {HIST.map((_, i) => (
          <circle key={i} cx={bx(i) + 0.5} cy={450} r="4.2" fill={pink.includes(i) ? '#da70d6' : i < 48 ? '#800080' : i === 85 ? '#eec860' : '#daa520'} />
        ))}
      </Plot>
      <Axis side="right" top={408} h={107} ticks={tr} />
    </div>
  );
}

const SLOPE = [293, 300, 302, 300, 306, 313, 319, 320, 311, 292, 253, 192, 202, 202, 160, 120, 126, 148, 168, 198, 207, 211, 204, 218, 246, 250, 222, 186, 180, 144, 156, 201, 204, 255, 303, 320, 324, 326, 326, 326, 325, 320, 290, 213, 184, 181, 87, 72, 78, 66, 60, 59, 59, 63, 64, 64, 66, 66, 73, 100, 108, 96, 105, 165, 207, 213, 253, 264, 212, 190, 165, 150, 165, 128, 117, 126, 99, 72, 63, 70, 66, 72, 175, 165, 153, 187, 252, 275, 265, 205, 157, 170, 140, 133, 144, 105, 90, 75, 72, 97, 116];
const sy = (v: number) => 510 + v / 3;
const squares = [0, 2, 10, 18, 26, 34, 42, 50, 58, 66, 74, 82, 90, 98];

function SlopePane() {
  const t: Tick[] = ticksOf(530, 11, 9, { 1: '60.00', 3: '20.00', 5: '-20.00', 7: '-60.00' });
  return (
    <div className="flex h-[106px] shrink-0">
      <Axis side="left" top={515} h={106} ticks={t} />
      <Plot top={515} h={106} ticks={t} over={
        <g>
          <rect x="48" y="517" width="16" height="11" fill="#0000ff" />
          <T x={56} y={522.5} a="middle" b c="#fff">A</T>
          <T x={70} y={523} w={359} s={11.5}>sjh_I_Slope_23_10_24 (2047,"TS",5,0,03,03,DarkGreen,GoldenRod,...</T>
          <T x={435} y={523} w={27} s={11.5} c="#ff0000">47.73</T>
          <T x={468} y={523} w={21} s={11.5} c="#0000ff">0.00</T>
          <T x={495} y={523} w={21} s={11.5} c="#ffcc00">0.00</T>
        </g>
      }>
        {[161, 241, 321, 491, 741, 901].map((x) => <circle key={x} cx={x} cy={574} r="7.5" fill="#ffd700" />)}
        <path d="M48 574H1052" stroke="#0000ff" strokeWidth="1.4" />
        {SLOPE.slice(0, -1).map((v, i) => {
          const n = SLOPE[i + 1];
          const gold2 = i === 1 || i === 12;
          const red = i === 2 || i === 51 || n > v;
          return <line key={i} x1={bx(i)} y1={sy(v)} x2={bx(i + 1)} y2={sy(n)} strokeWidth="2.6" strokeLinecap="round" stroke={gold2 ? '#daa520' : red ? '#800000' : '#008000'} />;
        })}
        {squares.map((i) => <rect key={i} x={bx(i) - 2} y={sy(SLOPE[i]) - 2} width="5" height="5" fill="#000" />)}
      </Plot>
      <Axis side="right" top={515} h={106} ticks={t}>
        <Tag y={548} fill="#ff1010" label="47.73" />
        <Tag y={574} fill="#0000ee" label="0.00" />
      </Axis>
    </div>
  );
}

const TIME: [number, string][] = [[81, '14'], [130, '21'], [181, '28'], [221, "9'23"], [271, '11'], [321, '18'], [371, '25'], [421, "10'23"], [471, '9'], [520, '16'], [570, '23'], [640, "11'23"], [671, '6'], [721, '13'], [771, '20'], [811, '27'], [851, "12'23"], [910, '11'], [960, '18'], [1010, '26'], [1051, "'24"], [1081, "2'24"], [1101, '26']];

function TimeAxis() {
  return (
    <svg className="w-full shrink-0" height={21} viewBox="4 621 1286 21">
      <path d="M4 621.5H1290" stroke="#9aa4b1" />
      {TIME.map(([x, l]) => (
        <g key={x}>
          <path d={`M${x} 622v3`} stroke="#9aa4b1" />
          <T x={x} y={632} a="middle" b c="#333">{l}</T>
        </g>
      ))}
    </svg>
  );
}

export default function App() {
  return (
    <div className="h-[654px] w-[1294px] overflow-hidden bg-black px-1 pt-1 [font-family:'Liberation_Sans',Arial,sans-serif]">
      <div className="flex h-[646px] flex-col bg-[#f5f5f5]">
        <Toolbars />
        <PricePane />
        <HistPane />
        <TopPane />
        <SlopePane />
        <TimeAxis />
        <div className="flex h-[8px] shrink-0 justify-between bg-[#e0e6ee]">
          <div className="w-2 bg-[#adb5c1]" />
          <div className="w-[40px] bg-[#adb5c1]" />
        </div>
      </div>
    </div>
  );
}
